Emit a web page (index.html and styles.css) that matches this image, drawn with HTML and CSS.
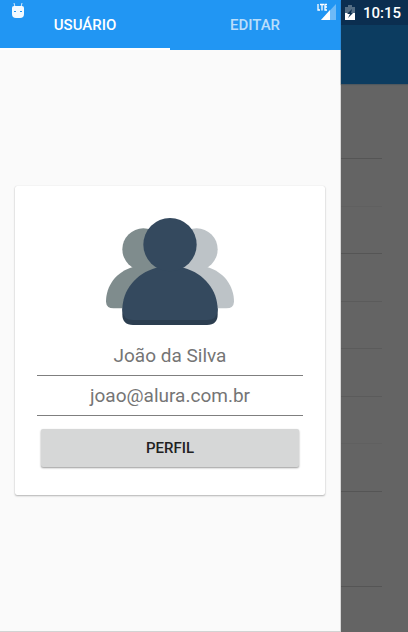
FILE: index.html
```html
<!DOCTYPE html>
<html lang="pt-BR">
<head>
  <meta charset="utf-8">
  <meta name="viewport" content="width=device-width, initial-scale=1">
  <title>Usuário</title>
  <link rel="stylesheet" href="styles.css">
</head>
<body>
  <div class="screen">
    <section class="drawer">
      <nav class="tabs">
        <button class="tab tab-active" type="button">USUÁRIO</button>
        <button class="tab" type="button">EDITAR</button>
      </nav>
      <main class="drawer-body">
        <form class="card">
          <svg class="avatar" viewBox="33 39 384 324" aria-hidden="true">
            <g fill="#7f8c8d">
              <circle cx="145" cy="133" r="63"/>
              <path d="M114 186C64 200 33 242 33 290Q34 310 56 310H225V186Z"/>
            </g>
            <g fill="#bdc3c7">
              <circle cx="305" cy="133" r="63"/>
              <path d="M336 186C386 200 417 242 417 290Q416 310 394 310H225V186Z"/>
            </g>
            <path fill="#2c3e50" d="M82 310V328Q82 360 114 360H336Q368 360 368 328V310Z"/>
            <path fill="#34495e" d="M184 188C122 205 82 256 82 314Q84 345 114 345H336Q366 345 368 314C368 256 328 205 266 188Z"/>
            <circle fill="#34495e" cx="225" cy="119" r="80"/>
          </svg>
          <input class="field" type="text" aria-label="Nome" value="João da Silva">
          <input class="field" type="email" aria-label="E-mail" value="joao@alura.com.br">
          <button class="profile-button" type="button">PERFIL</button>
        </form>
      </main>
    </section>
    <aside class="backdrop">
      <div class="backdrop-bar"></div>
      <ul class="rows">
        <li class="row row-first"></li>
        <li class="row row-faint"></li>
        <li class="row"></li>
        <li class="row row-soft"></li>
        <li class="row row-soft"></li>
        <li class="row row-soft"></li>
        <li class="row row-faint"></li>
        <li class="row"></li>
        <li class="row row-plain"></li>
        <li class="row"></li>
      </ul>
    </aside>
    <header class="status">
      <svg class="status-robot" viewBox="0 0 14 16" aria-hidden="true">
        <path d="M3 0L4 4M11 0L10 4" stroke="#fff" stroke-opacity=".8"/>
        <path d="M3 3H11Q13 3 13 5V11Q13 15 9 15H5Q1 15 1 11V5Q1 3 3 3Z" fill="#fff" fill-opacity=".95"/>
        <path d="M3 8H5V9H3ZM9 8H11V9H9Z" fill="#2196f3"/>
      </svg>
      <svg class="status-signal" viewBox="0 0 20 18" aria-hidden="true">
        <path d="M19 1V17H4Z" fill="#fff" fill-opacity=".35"/>
        <path d="M13 7V17H4Z" fill="#fff"/>
        <path d="M1 1V7H3M3 1.500H7M5 1.500V7.500M10 1.500H8V7H10M8 4H10" fill="none" stroke="#fff" stroke-width="1.300"/>
      </svg>
      <svg class="status-battery" viewBox="0 0 10 16" aria-hidden="true">
        <path d="M3 0H7V2H10V15H0V2H3Z" fill="#fff" fill-opacity=".3"/>
        <path d="M0 8H10V15H0Z" fill="#fff"/>
        <path d="M7 4L2 9H5L3 13L8 8H6Z" fill="#0b2e50"/>
      </svg>
      <time class="clock">10:15</time>
    </header>
  </div>
</body>
</html>
```
FILE: styles.css
```css
* {
  box-sizing: border-box;
}

body {
  margin: 0;
  font-family: Roboto, "Liberation Sans", sans-serif;
}

.screen {
  position: relative;
  display: grid;
  grid-template-columns: 1fr 67px;
  min-height: 100vh;
}

.drawer {
  display: flex;
  flex-direction: column;
  background: #fafafa;
  border-bottom: 1px solid #d3d3d3;
}

.tabs {
  display: flex;
  height: 50px;
  padding-right: 1px;
  background: #2196f3;
}

.tab {
  flex: 1;
  padding: 2px 0 0;
  border: 0;
  border-bottom: 2px solid transparent;
  background: none;
  color: rgba(255, 255, 255, 0.7);
  font: 500 15px/20px Roboto, sans-serif;
}

.tab-active {
  border-bottom-color: #fff;
  color: #fff;
}

.drawer-body {
  flex: 1;
  display: flex;
  flex-direction: column;
  justify-content: center;
  padding: 0 15px;
  border-right: 1px solid #d8d8d8;
}

.card {
  display: flex;
  flex-direction: column;
  padding: 32px 22px 28px;
  border-radius: 2px;
  background: #fff;
  box-shadow: 0 1px 2px rgba(0, 0, 0, 0.28), 0 0 1px rgba(0, 0, 0, 0.15);
}

.avatar {
  align-self: center;
  width: 128px;
  height: 108px;
  margin-bottom: 10px;
}

.field {
  width: 100%;
  height: 40px;
  padding: 0;
  border: 0;
  border-bottom: 1px solid #7f7f7f;
  background: none;
  color: #757575;
  font: 19px/24px Roboto, sans-serif;
  text-align: center;
}

.profile-button {
  height: 38px;
  margin: 13px 4px 0;
  padding: 0;
  border: 0;
  border-radius: 2px;
  background: #d6d7d7;
  box-shadow: 0 1px 2px rgba(0, 0, 0, 0.4);
  color: #212121;
  font: 500 15px/20px Roboto, sans-serif;
}

.backdrop {
  background: #646464;
}

.backdrop-bar {
  height: 84px;
  border-top: 25px solid #0b2e50;
  background: #0c3c60;
  box-shadow: 0 1px 1px #50585e;
}

.rows {
  margin: 0;
  padding: 0 26px 0 0;
  list-style: none;
}

.row {
  height: 48px;
  border-bottom: 1px solid #555;
}

.row:nth-child(odd) {
  height: 47px;
}

.row.row-first {
  height: 75px;
}

.row-soft {
  border-color: #5b5b5b;
}

.row-faint {
  border-color: #606060;
}

.row-plain {
  border-color: transparent;
}

.status {
  position: absolute;
  top: 0;
  left: 0;
  right: 0;
  display: flex;
  align-items: center;
  height: 25px;
  padding: 0 7px 0 11px;
  pointer-events: none;
}

.status-robot {
  width: 14px;
  height: 16px;
  margin: 0 auto 4px 0;
}

.status-signal {
  width: 20px;
  height: 18px;
  margin: 0 8px 2px 0;
}

.status-battery {
  width: 10px;
  height: 16px;
  margin-right: 8px;
}

.clock {
  color: #fff;
  font-size: 15px;
  font-weight: 500;
  line-height: 24px;
}
```
